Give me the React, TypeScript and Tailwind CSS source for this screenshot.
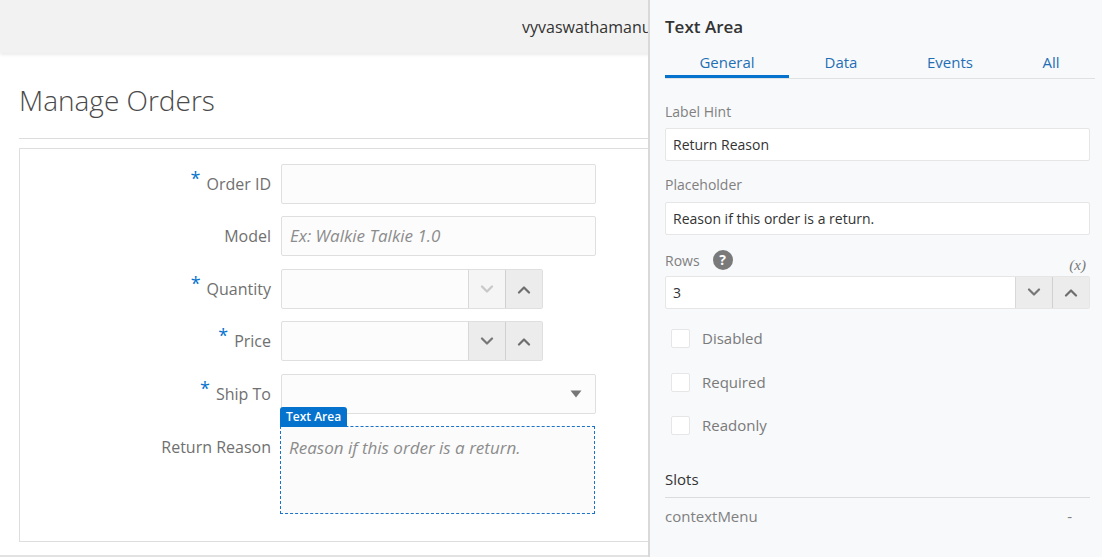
import React from "react";

const Chevron = ({ up, color }: { up?: boolean; color: string }) => (
  <svg width="14" height="9" viewBox="0 0 14 9" fill="none">
    <path
      d={up ? "M2 7.5 L7 2.5 L12 7.5" : "M2 1.5 L7 6.5 L12 1.5"}
      stroke={color}
      strokeWidth="2.2"
      strokeLinecap="round"
      strokeLinejoin="round"
    />
  </svg>
);

const Req = () => (
  <span className="text-[#0572ce] text-[18px] leading-none relative -top-[6px] mr-[6px]">*</span>
);

const Label = ({ children, req }: { children: React.ReactNode; req?: boolean }) => (
  <div className="w-[261px] pr-[10px] flex items-center justify-end text-[16px] text-[#707070] whitespace-nowrap">
    {req && <Req />}
    <span>{children}</span>
  </div>
);

const TextInput = ({ placeholder }: { placeholder?: string }) => (
  <div className="w-[315px] h-[40px] border border-[#dfdfdf] rounded-[2px] bg-[#fcfcfc] flex items-center px-[8px]">
    {placeholder && <span className="italic text-[17px] text-[#8c8c8c]">{placeholder}</span>}
  </div>
);

const NumberInput = ({ downDisabled }: { downDisabled?: boolean }) => (
  <div className="w-[262px] h-[40px] border border-[#dfdfdf] rounded-[2px] bg-[#fcfcfc] flex">
    <div className="flex-1" />
    <div
      className={`w-[37px] h-full flex items-center justify-center border-l border-[#d8d8d8] ${
        downDisabled ? "bg-[#f5f5f5]" : "bg-[#ececec]"
      }`}
    >
      <Chevron color={downDisabled ? "#c8c8c8" : "#777777"} />
    </div>
    <div className="w-[37px] h-full flex items-center justify-center border-l border-[#d0d0d0] bg-[#ececec]">
      <Chevron up color="#6e6e6e" />
    </div>
  </div>
);

const Checkbox = ({ label }: { label: string }) => (
  <div className="flex items-center h-[20px] pl-[6px]">
    <div className="w-[19px] h-[19px] bg-white border border-[#e6e6e6] rounded-[2px]" />
    <span className="ml-[12px] text-[15px] text-[#7a7a7a]">{label}</span>
  </div>
);

export default function App() {
  return (
    <div
      className="w-[1102px] h-[557px] relative overflow-hidden bg-white"
      style={{ fontFamily: '"Open Sans", "Noto Sans", sans-serif' }}
    >
      {/* Main page */}
      <div className="flex flex-col h-full">
        <div className="h-[53px] shrink-0 bg-[#f2f2f2] shadow-[0_2px_3px_rgba(0,0,0,0.08)] flex items-center pl-[522px] relative z-10">
          <div className="w-[126px] overflow-hidden whitespace-nowrap text-[16px] text-[#333]">
            vyvaswathamanuel@oracle.com
          </div>
        </div>
        <div className="px-[19px] flex flex-col flex-1">
          <h1 className="mt-[29px] text-[28px] font-light text-[#4a4a4a] leading-[36px] h-[36px]">Manage Orders</h1>
          <div className="mt-[20px] h-px bg-[#dcdcdc]" />
          <div className="mt-[9px] h-[394px] border border-[#dedede] pt-[15px] flex flex-col">
            <div className="flex h-[40px]">
              <Label req>Order ID</Label>
              <TextInput />
            </div>
            <div className="flex h-[40px] mt-[12px]">
              <Label>Model</Label>
              <TextInput placeholder="Ex: Walkie Talkie 1.0" />
            </div>
            <div className="flex h-[40px] mt-[13px]">
              <Label req>Quantity</Label>
              <NumberInput downDisabled />
            </div>
            <div className="flex h-[40px] mt-[12px]">
              <Label req>Price</Label>
              <NumberInput />
            </div>
            <div className="flex h-[40px] mt-[13px]">
              <Label req>Ship To</Label>
              <div className="w-[315px] h-[40px] border border-[#dfdfdf] rounded-[2px] bg-[#fcfcfc] flex items-center justify-end pr-[13px]">
                <svg width="12" height="8" viewBox="0 0 12 8">
                  <path d="M0.5 0.5 L11.5 0.5 L6 7.5 Z" fill="#777" />
                </svg>
              </div>
            </div>
            <div className="flex mt-[12px]">
              <div className="w-[261px] pr-[10px] pt-[9px] text-right text-[16px] text-[#707070] whitespace-nowrap">
                Return Reason
              </div>
              <div className="relative -ml-px">
                <div className="absolute left-0 -top-[19px] h-[20px] px-[6px] bg-[#0572ce] rounded-t-[3px] text-white text-[12px] font-semibold flex items-center">
                  Text Area
                </div>
                <div className="w-[315px] h-[88px] border border-dashed border-[#1a73c8] bg-[#fbfbfb] px-[8px] pt-[8px]">
                  <span className="italic text-[17px] text-[#8c8c8c]">Reason if this order is a return.</span>
                </div>
              </div>
            </div>
          </div>
        </div>
        <div className="mt-auto h-[2px] bg-[#e2e2e2]" />
      </div>

      {/* Property panel (overlay) */}
      <div className="absolute top-0 right-0 w-[454px] h-full bg-[#f8f9fb] border-l-[2px] border-[#d9d9d9] z-20 pl-[15px] pr-[12px] flex flex-col">
        <div className="mt-[15px] h-[24px] leading-[24px] text-[17px] font-semibold text-[#333]">Text Area</div>
        <div className="mt-[8px] flex h-[32px] border-b border-[#dfe1e3] mr-[-5px] text-[15px] text-[#1f6fb5]">
          <div className="w-[124px] relative flex items-center justify-center pb-[1px]">
            General
            <div className="absolute left-0 right-0 bottom-0 h-[3px] bg-[#0572ce]" />
          </div>
          <div className="w-[104px] flex items-center justify-center pb-[1px]">Data</div>
          <div className="w-[114px] flex items-center justify-center pb-[1px]">Events</div>
          <div className="w-[88px] flex items-center justify-center pb-[1px]">All</div>
        </div>

        <div className="mt-[23px] text-[14px] leading-[20px] text-[#808080]">Label Hint</div>
        <div className="mt-[6px] h-[33px] bg-white border border-[#e6e6e6] rounded-[2px] flex items-center px-[7px] text-[14px] text-[#333]">
          Return Reason
        </div>

        <div className="mt-[14px] text-[14px] leading-[20px] text-[#808080]">Placeholder</div>
        <div className="mt-[7px] h-[33px] bg-white border border-[#e6e6e6] rounded-[2px] flex items-center px-[7px] text-[14px] text-[#333]">
          Reason if this order is a return.
        </div>

        <div className="mt-[12px] h-[26px] flex items-center relative">
          <span className="text-[14px] text-[#808080]">Rows</span>
          <span className="ml-[13px] w-[20px] h-[20px] rounded-full bg-[#7a7a7a] text-white text-[14px] font-bold flex items-center justify-center leading-none">
            ?
          </span>
          <span
            className="absolute right-[4px] top-[7px] italic text-[15px] text-[#777]"
            style={{ fontFamily: '"Liberation Serif", "DejaVu Serif", serif' }}
          >
            (x)
          </span>
        </div>
        <div className="mt-[3px] h-[33px] bg-white border border-[#e6e6e6] rounded-[2px] flex">
          <div className="flex-1 flex items-center px-[7px] text-[14px] text-[#333]">3</div>
          <div className="w-[37px] h-full bg-[#ececec] border-l border-[#d8d8d8] flex items-center justify-center">
            <Chevron color="#777" />
          </div>
          <div className="w-[37px] h-full bg-[#ececec] border-l border-[#d0d0d0] flex items-center justify-center">
            <Chevron up color="#6e6e6e" />
          </div>
        </div>

        <div className="mt-[19px] flex flex-col gap-[24px]">
          <Checkbox label="Disabled" />
          <Checkbox label="Required" />
          <div className="-mt-[1px]">
            <Checkbox label="Readonly" />
          </div>
        </div>

        <div className="mt-[33px] h-[22px] leading-[22px] text-[15px] text-[#333]">Slots</div>
        <div className="mt-[7px] h-px bg-[#dcdcdc]" />
        <div className="mt-[7px] flex justify-between text-[15px] text-[#808080] pr-[18px]">
          <span>contextMenu</span>
          <span>-</span>
        </div>
      </div>
    </div>
  );
}
